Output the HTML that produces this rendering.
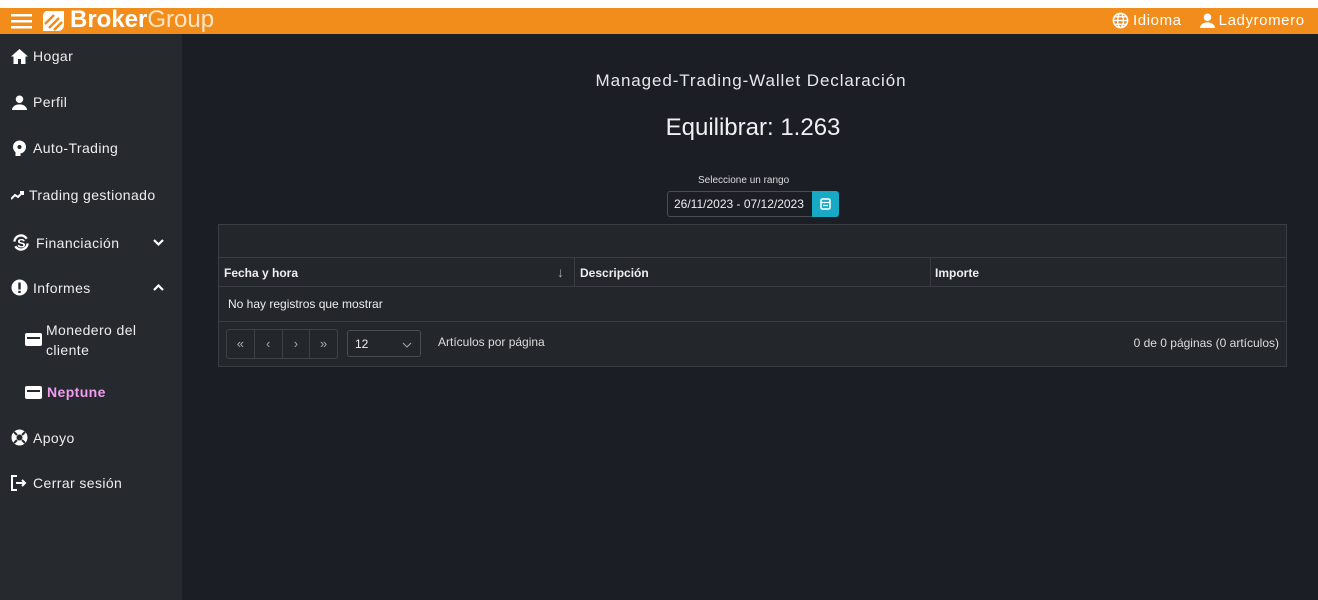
<!DOCTYPE html>
<html><head><meta charset="utf-8"><style>
*{box-sizing:border-box;margin:0;padding:0}
body{width:1318px;height:600px;background:#1b1e25;font-family:"Liberation Sans",sans-serif;color:#e6e6e6;position:relative;overflow:hidden}
.top{position:absolute;left:0;top:0;width:1318px;height:8px;background:#fff}
.bar{position:absolute;left:0;top:8px;width:1318px;height:26px;background:#f28c1a;color:#fff}
.side{position:absolute;left:0;top:34px;width:182px;height:566px;background:#26292e}
.it{position:absolute;left:11px;font-size:14px;color:#eee;display:flex;align-items:center;gap:5px;letter-spacing:0.4px}
.it svg{flex:none}
.chev{position:absolute;left:153px}
.main{position:absolute;left:182px;top:34px;right:0;bottom:0}
.t1{position:absolute;top:37px;width:100%;left:0;text-align:center;font-size:17px;color:#e8e8e8;padding-left:2px;letter-spacing:0.9px}
.t2{position:absolute;top:80px;width:100%;left:0;text-align:center;font-size:24px;color:#f0f0f0;padding-left:6px}
.box{position:absolute;left:218px;top:224px;width:1069px;height:143px;border:1px solid #3a3d43;background:#23262b}
</style></head><body>
<div class="top"></div>
<div class="bar">
 <svg style="position:absolute;left:11px;top:6px" width="21" height="15"><rect y="0" width="21" height="2.5" fill="#fff"/><rect y="6" width="21" height="2.5" fill="#fff"/><rect y="12" width="21" height="2.5" fill="#fff"/></svg>
 <svg style="position:absolute;left:42px;top:2px" width="23" height="22" viewBox="0 0 23 22"><path d="M4 1h18v14a6 6 0 0 1-6 6H1V7a6 6 0 0 1 3-6z" fill="#fff"/><path d="M3 14l9-9M7 18l10-10M12 20l8-8" stroke="#f28c1a" stroke-width="2.5"/></svg>
 <div style="position:absolute;left:70px;top:-2px;font-size:24px;line-height:28px"><b>Broker</b><span style="color:#fde5c5">Group</span></div>
 <div style="position:absolute;left:1112px;top:4px;font-size:15px;display:flex;align-items:center;gap:4px;letter-spacing:0.6px">
  <svg width="17" height="17" viewBox="0 0 18 18"><circle cx="9" cy="9" r="7.5" fill="none" stroke="#fff" stroke-width="1.7"/><ellipse cx="9" cy="9" rx="3" ry="7.5" fill="none" stroke="#fff" stroke-width="1.5"/><path d="M1.5 9h15M3 5h12M3 13h12" stroke="#fff" stroke-width="1.3"/></svg>Idioma
  <svg style="margin-left:14px" width="15" height="15" viewBox="0 0 16 16"><circle cx="8" cy="4.5" r="4" fill="#fff"/><path d="M0 16a8 6 0 0 1 16 0z" fill="#fff"/></svg>Ladyromero</div>
</div>
<div class="side">
 <div class="it" style="top:14px"><svg width="17" height="15" viewBox="0 0 17 15"><path d="M8.5 0L0 7.5h2.5V15h4.5v-5h3v5h4.5V7.5H17z" fill="#fff"/></svg>Hogar</div>
 <div class="it" style="top:60px"><svg width="17" height="15" viewBox="0 0 16 16"><circle cx="8" cy="4.5" r="4" fill="#fff"/><path d="M0 16a8 6 0 0 1 16 0z" fill="#fff"/></svg>Perfil</div>
 <div class="it" style="top:106px"><svg width="17" height="16" viewBox="0 0 16 16"><circle cx="8" cy="7" r="6.5" fill="#fff"/><rect x="4" y="12" width="5" height="4" fill="#fff"/><circle cx="8" cy="7" r="2" fill="#26292e"/></svg>Auto-Trading</div>
 <div class="it" style="top:153px"><svg width="13" height="10" viewBox="0 0 13 10"><path d="M0 9l4-4 3 2 5-5M9 2h3v3" stroke="#fff" stroke-width="2" fill="none"/></svg>Trading gestionado</div>
 <div class="it" style="top:199px"><svg width="20" height="19" viewBox="0 0 20 20"><path d="M3 9a7 7 0 0 1 13-3M17 11a7 7 0 0 1-13 3" stroke="#fff" stroke-width="2.5" fill="none"/><text x="6" y="15" font-size="13" font-weight="bold" fill="#fff" font-family="Liberation Sans">S</text></svg>Financiación</div>
 <svg class="chev" style="top:205px" width="11" height="8"><path d="M1 1l4.5 4.5L10 1" stroke="#fff" stroke-width="2.2" fill="none"/></svg>
 <div class="it" style="top:245px"><svg width="17" height="17" viewBox="0 0 17 17"><circle cx="8.5" cy="8.5" r="8" fill="#fff"/><rect x="7.3" y="3.5" width="2.4" height="7" fill="#26292e"/><rect x="7.3" y="11.8" width="2.4" height="2.2" fill="#26292e"/></svg>Informes</div>
 <svg class="chev" style="top:250px" width="11" height="8"><path d="M1 6l4.5-4.5L10 6" stroke="#fff" stroke-width="2.2" fill="none"/></svg>
 <svg style="position:absolute;left:25px;top:299px" width="17" height="13" viewBox="0 0 17 13"><rect width="17" height="13" rx="2" fill="#fff"/><rect x="2" y="4" width="13" height="2" fill="#26292e"/></svg>
 <div style="position:absolute;left:46px;top:286px;font-size:14px;line-height:20px;color:#eee;letter-spacing:0.4px">Monedero del<br>cliente</div>
 <div class="it" style="top:350px;left:25px"><svg width="17" height="13" viewBox="0 0 17 13"><rect width="17" height="13" rx="2" fill="#fff"/><rect x="2" y="4" width="13" height="2" fill="#26292e"/></svg><span style="color:#f29cf0;font-weight:bold">Neptune</span></div>
 <div class="it" style="top:395px"><svg width="17" height="17" viewBox="0 0 17 17"><circle cx="8.5" cy="8.5" r="8" fill="#fff"/><circle cx="8.5" cy="8.5" r="3" fill="#26292e"/><path d="M3 3l3 3M14 3l-3 3M3 14l3-3M14 14l-3-3" stroke="#26292e" stroke-width="2"/></svg>Apoyo</div>
 <div class="it" style="top:441px"><svg width="17" height="16" viewBox="0 0 17 16"><path d="M6 1H1v14h5" stroke="#fff" stroke-width="2" fill="none"/><path d="M5 8h9M11 5l3 3-3 3" stroke="#fff" stroke-width="2" fill="none"/></svg>Cerrar sesión</div>
</div>
<div class="main">
 <div class="t1">Managed-Trading-Wallet Declaración</div>
 <div class="t2">Equilibrar: 1.263</div>
 <div style="position:absolute;left:516px;top:141px;font-size:10px;color:#ddd">Seleccione un rango</div>
</div>
<div style="position:absolute;left:667px;top:191px;width:146px;height:26px;border:1px solid #4a4d53;border-radius:3px 0 0 3px;font-size:12px;color:#eee;padding:5px 0 0 6px;background:#1b1e25">26/11/2023 - 07/12/2023</div>
<div style="position:absolute;left:812px;top:191px;width:27px;height:26px;background:#18a9c4;border-radius:0 3px 3px 0"><svg style="position:absolute;left:8px;top:7px" width="11" height="12" viewBox="0 0 11 12"><rect x="1" y="1" width="9" height="10" rx="1.5" fill="none" stroke="#fff" stroke-width="1.5"/><path d="M1 4.5h9M3 7.5h5" stroke="#fff" stroke-width="1.3"/></svg></div>
<div class="box">
 <div style="position:absolute;left:0;top:32px;width:1067px;height:30px;border-top:1px solid #3a3d43;border-bottom:1px solid #3a3d43;font-size:12px;font-weight:bold;color:#eee">
  <div style="position:absolute;left:5px;top:8px">Fecha y hora</div>
  <div style="position:absolute;left:338px;top:6px;font-weight:normal;color:#aaa;font-size:14px">↓</div>
  <div style="position:absolute;left:355px;top:0;height:29px;border-left:1px solid #3a3d43"></div>
  <div style="position:absolute;left:361px;top:8px">Descripción</div>
  <div style="position:absolute;left:711px;top:0;height:29px;border-left:1px solid #3a3d43"></div>
  <div style="position:absolute;left:716px;top:8px">Importe</div>
 </div>
 <div style="position:absolute;left:9px;top:72px;font-size:12px;color:#eee">No hay registros que mostrar</div>
 <div style="position:absolute;left:0;top:96px;width:1067px;border-top:1px solid #3a3d43"></div>
 <div style="position:absolute;left:7px;top:104px;width:112px;height:30px;border:1px solid #3e4147;border-radius:3px;display:flex;font-size:13px;color:#aaa">
  <div style="flex:1;text-align:center;line-height:28px;border-right:1px solid #3e4147">«</div><div style="flex:1;text-align:center;line-height:28px;border-right:1px solid #3e4147">‹</div><div style="flex:1;text-align:center;line-height:28px;border-right:1px solid #3e4147">›</div><div style="flex:1;text-align:center;line-height:28px">»</div></div>
 <div style="position:absolute;left:128px;top:105px;width:74px;height:27px;border:1px solid #4a4d53;border-radius:3px;font-size:12px;padding:6px 0 0 7px;color:#eee">12<svg style="position:absolute;right:8px;top:11px" width="10" height="6"><path d="M1 1l4 4 4-4" stroke="#aaa" fill="none"/></svg></div>
 <div style="position:absolute;left:219px;top:110px;font-size:12px;color:#ddd">Artículos por página</div>
 <div style="position:absolute;right:7px;top:111px;font-size:12px;color:#ddd">0 de 0 páginas (0 artículos)</div>
</div>
</body></html>
